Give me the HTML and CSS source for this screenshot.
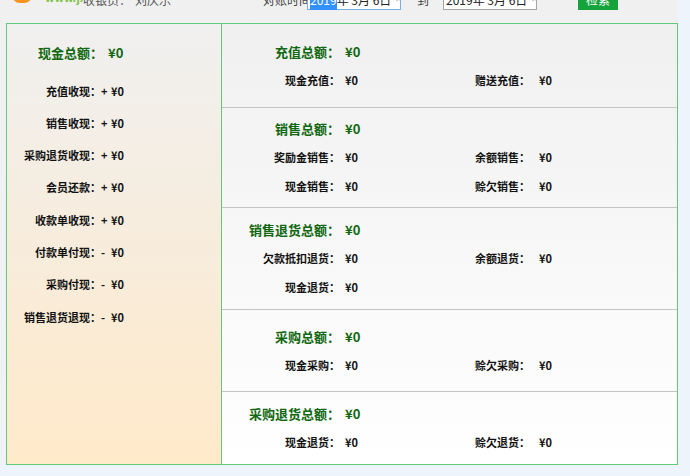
FILE: index.html
```html
<!DOCTYPE html>
<html lang="zh-CN">
<head>
<meta charset="utf-8">
<title>对账</title>
<link rel="stylesheet" href="styles.css">
</head>
<body>
<div class="page">
  <div class="header">
    <div class="bar">
      <span class="logo"></span>
      <span class="site">www.jxc.com</span>
      <span class="cashier">收银员：</span>
      <span class="name">刘庆乐</span>
      <span class="lbl">对账时间</span>
      <span class="date focus"><span class="sel">2019</span>年 3月 6日<svg class="cal" width="14" height="10" viewBox="0 0 14 10"><rect x="0.5" y="1.5" width="7" height="7" fill="#fff" stroke="#888"/><rect x="1" y="2" width="6" height="2" fill="#aaa"/><path d="M10 4h4l-2 3z" fill="#444"/></svg></span>
      <span class="to">到</span>
      <span class="date">2019年 3月 6日<svg class="cal" width="14" height="10" viewBox="0 0 14 10"><rect x="0.5" y="1.5" width="7" height="7" fill="#fff" stroke="#888"/><rect x="1" y="2" width="6" height="2" fill="#aaa"/><path d="M10 4h4l-2 3z" fill="#444"/></svg></span>
      <span class="btn">检索</span>
    </div>
  </div>
  <div class="box">
    <div class="left">
      <div class="ltitle"><span>现金总额：</span><span class="lv">¥0</span></div>
      <div class="lrow"><span class="lk">充值收现：</span><span class="sg">+</span><span>¥0</span></div>
      <div class="lrow"><span class="lk">销售收现：</span><span class="sg">+</span><span>¥0</span></div>
      <div class="lrow"><span class="lk">采购退货收现：</span><span class="sg">+</span><span>¥0</span></div>
      <div class="lrow"><span class="lk">会员还款：</span><span class="sg">+</span><span>¥0</span></div>
      <div class="lrow"><span class="lk">收款单收现：</span><span class="sg">+</span><span>¥0</span></div>
      <div class="lrow"><span class="lk">付款单付现：</span><span class="sg">-</span><span>¥0</span></div>
      <div class="lrow"><span class="lk">采购付现：</span><span class="sg">-</span><span>¥0</span></div>
      <div class="lrow"><span class="lk">销售退货退现：</span><span class="sg">-</span><span>¥0</span></div>
    </div>
    <div class="right">
      <div class="sec s1">
        <div class="line title"><span class="k">充值总额：</span><span class="v">¥0</span></div>
        <div class="line"><span class="k">现金充值：</span><span class="v">¥0</span><span class="k2">赠送充值：</span><span class="v2">¥0</span></div>
      </div>
      <div class="sec s2">
        <div class="line title"><span class="k">销售总额：</span><span class="v">¥0</span></div>
        <div class="line"><span class="k">奖励金销售：</span><span class="v">¥0</span><span class="k2">余额销售：</span><span class="v2">¥0</span></div>
        <div class="line"><span class="k">现金销售：</span><span class="v">¥0</span><span class="k2">赊欠销售：</span><span class="v2">¥0</span></div>
      </div>
      <div class="sec s3">
        <div class="line title"><span class="k">销售退货总额：</span><span class="v">¥0</span></div>
        <div class="line"><span class="k">欠款抵扣退货：</span><span class="v">¥0</span><span class="k2">余额退货：</span><span class="v2">¥0</span></div>
        <div class="line"><span class="k">现金退货：</span><span class="v">¥0</span></div>
      </div>
      <div class="sec s4">
        <div class="line title"><span class="k">采购总额：</span><span class="v">¥0</span></div>
        <div class="line"><span class="k">现金采购：</span><span class="v">¥0</span><span class="k2">赊欠采购：</span><span class="v2">¥0</span></div>
      </div>
      <div class="sec s5">
        <div class="line title"><span class="k">采购退货总额：</span><span class="v">¥0</span></div>
        <div class="line"><span class="k">现金退货：</span><span class="v">¥0</span><span class="k2">赊欠退货：</span><span class="v2">¥0</span></div>
      </div>
    </div>
  </div>
</div>
</body>
</html>
```
FILE: styles.css
```css
html, body {
  margin: 0;
  padding: 0;
}
body {
  background: #eef4fb;
  font-family: "Noto Sans CJK SC", "Microsoft YaHei", sans-serif;
  color: #111;
  width: 690px;
  height: 476px;
  overflow: hidden;
}
.page {
  width: 678px;
  height: 465px;
  background: linear-gradient(#f0f0f0, #eef3f9);
}
.header {
  height: 23px;
  overflow: hidden;
}
.bar {
  display: flex;
  align-items: center;
  height: 20px;
  margin-top: -10px;
  font-size: 12px;
  line-height: 20px;
  color: #333;
  white-space: nowrap;
}
.logo {
  align-self: flex-start;
  margin-left: 12px;
  width: 20px;
  height: 13px;
  border-radius: 0 0 8px 8px;
  background: #f7941d;
}
.site {
  align-self: flex-start;
  margin-top: -3px;
  margin-left: 13px;
  width: 38px;
  overflow: hidden;
  color: #7cc242;
  font-size: 11px;
  font-weight: bold;
}
.cashier {
  width: 52px;
  color: #555;
}
.name {
  width: 128px;
  color: #555;
}
.lbl {
  width: 44px;
  color: #444;
}
.date {
  box-sizing: border-box;
  width: 94px;
  height: 20px;
  border: 1px solid #a5a5a5;
  background: #fff;
  padding-left: 2px;
  display: flex;
  align-items: center;
  color: #222;
  font-size: 12px;
}
.date.focus {
  border-color: #7aaee6;
}
.sel {
  background: #3390ff;
  color: #fff;
}
.cal {
  margin-left: 5px;
}
.to {
  margin-left: 16px;
  width: 26px;
  color: #444;
}
.btn {
  margin-left: 41px;
  width: 40px;
  height: 20px;
  background: #15a33b;
  color: #fff;
  text-align: center;
  font-size: 12px;
}
.box {
  margin-left: 6px;
  width: 672px;
  height: 442px;
  box-sizing: border-box;
  border: 1px solid #63c97a;
  display: flex;
}
.left {
  width: 214px;
  border-right: 1px solid #63c97a;
  background: linear-gradient(#f0f0f0, #ffe9c9);
  font-weight: bold;
}
.ltitle {
  margin-top: 19px;
  padding-left: 31px;
  height: 20px;
  line-height: 20px;
  font-size: 13px;
  color: #0f670f;
  margin-bottom: 11.5px;
}
.lv {
  margin-left: 5px;
}
.lrow {
  display: grid;
  grid-template-columns: 94px 10px auto;
  height: 32.3px;
  line-height: 32.3px;
  font-size: 11px;
}
.lk {
  text-align: right;
}
.right {
  flex: 1;
  display: flex;
  flex-direction: column;
  background: linear-gradient(#f0f0f0, #ffffff);
  font-weight: bold;
}
.sec {
  display: flex;
  flex-direction: column;
  justify-content: center;
  border-bottom: 1px solid #c4c4c4;
}
.s1 { height: 83px; }
.s2 { height: 99px; }
.s3 { height: 101px; }
.s4 { height: 81px; }
.s5 { flex: 1; border-bottom: none; }
.line {
  display: grid;
  grid-template-columns: 118px 135px 64px 1fr;
  height: 29px;
  line-height: 29px;
  font-size: 11px;
}
.line .k {
  text-align: right;
}
.line .v {
  padding-left: 5px;
}
.line.title {
  font-size: 13px;
  color: #0f670f;
}
```
